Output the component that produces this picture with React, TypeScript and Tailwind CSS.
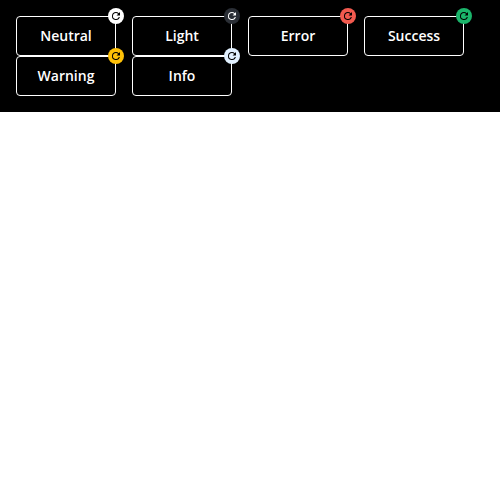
const items = [
  { label: "Neutral", tone: "bg-white text-black" },
  { label: "Light", tone: "bg-[#2b2f36] text-white" },
  { label: "Error", tone: "bg-[#f25a4f] text-black" },
  { label: "Success", tone: "bg-[#1bb56b] text-black" },
  { label: "Warning", tone: "bg-[#ffc107] text-black" },
  { label: "Info", tone: "bg-[#e1f0ff] text-black" },
];

function ReloadIcon() {
  return (
    <svg viewBox="0 0 24 24" className="size-3" fill="currentColor">
      <path d="M17.65 6.35A7.96 7.96 0 0 0 12 4a8 8 0 1 0 7.73 10h-2.08A6 6 0 1 1 12 6c1.66 0 3.14.69 4.22 1.78L13 11h7V4z" />
    </svg>
  );
}

export default function App() {
  return (
    <main className="flex flex-wrap gap-x-4 bg-black p-4 font-['Open_Sans',sans-serif]">
      {items.map(({ label, tone }) => (
        <div key={label} className="relative flex h-10 w-[100px] items-center justify-center rounded-[4px] border border-white text-sm font-semibold text-white">
          {label}
          <span className={`absolute -top-[9px] -right-[9px] z-10 flex size-4 items-center justify-center rounded-full ${tone}`}>
            <ReloadIcon />
          </span>
        </div>
      ))}
    </main>
  );
}
